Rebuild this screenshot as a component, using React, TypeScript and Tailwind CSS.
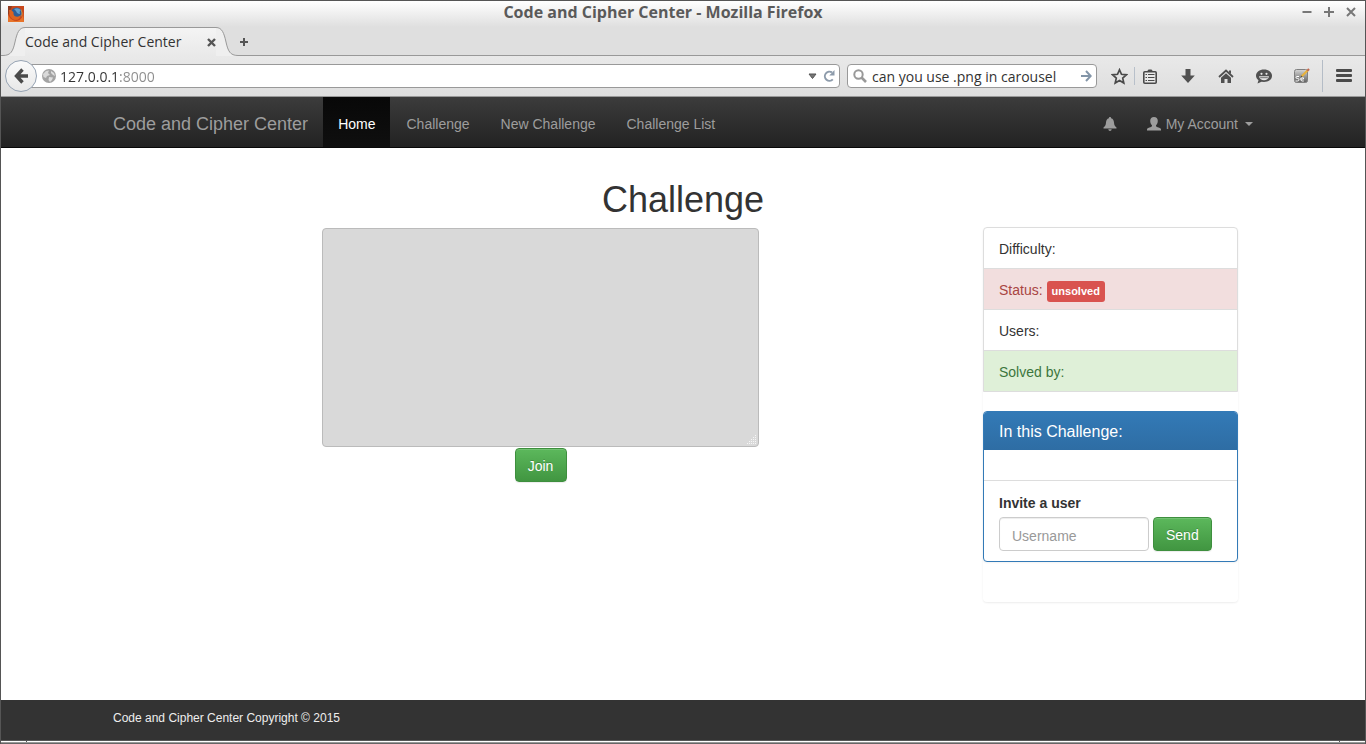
import type { ReactNode } from "react";

const chromeFont = "font-['Open_Sans','Noto_Sans',sans-serif]";

function ToolButton({ label, className, children }: { label: string; className: string; children: ReactNode }) {
  return (
    <button type="button" aria-label={label} className={`flex h-8 shrink-0 items-center justify-center ${className}`}>
      {children}
    </button>
  );
}

function FirefoxLogo() {
  return (
    <svg width="16" height="16" viewBox="0 0 16 16" aria-hidden="true">
      <rect width="16" height="16" fill="#c8481c" />
      <path d="M0 9 Q3 15 9 15 Q15 14 15 6 L16 16 H0Z" fill="#e8742a" />
      <path d="M0 0H4L2 6 0 9Z" fill="#8f3a1f" />
      <circle cx="8.5" cy="7" r="5.5" fill="#2f5f96" />
      <path d="M6 3 Q10 1 13 4 Q11 5 12 8 Q9 8 8 5Z" fill="#5fa0cf" />
      <path d="M1 4 Q3 3 4 5 Q5 5 5.500 6.500 Q5 8 6.500 10 Q10 12 13 9 Q12 14 7 14 Q1 13 1 4Z" fill="#dc6420" />
      <path d="M13 3 Q15.500 7 13.500 11 Q14 7 13 3Z" fill="#f2a43a" />
    </svg>
  );
}

function TitleBar() {
  return (
    <div className="flex h-[26px] items-center bg-linear-to-b from-white to-[#dfdfdf] pr-[9px] pl-[7px]">
      <FirefoxLogo />
      <h2 className="flex-1 pb-1 text-center text-base leading-5 font-bold text-[#5a5a5a]">
        Code and Cipher Center - Mozilla Firefox
      </h2>
      <div className="flex gap-3 pb-1">
        <button type="button" aria-label="Minimize">
          <svg width="10" height="10" viewBox="0 0 10 10" stroke="#777" strokeWidth="2"><path d="M0.500 5H9.500" /></svg>
        </button>
        <button type="button" aria-label="Maximize">
          <svg width="10" height="10" viewBox="0 0 10 10" stroke="#777" strokeWidth="2"><path d="M0 5H10M5 0V10" /></svg>
        </button>
        <button type="button" aria-label="Close window">
          <svg width="10" height="10" viewBox="0 0 10 10" stroke="#777" strokeWidth="2"><path d="M1 1L9 9M9 1L1 9" /></svg>
        </button>
      </div>
    </div>
  );
}

function TabStrip() {
  return (
    <div className="flex h-[29px] bg-[#dfdfdf]">
      <div className="w-[2px] border-b border-[#999]" />
      <svg width="22" height="29" viewBox="0 0 22 29" fill="none" aria-hidden="true">
        <path d="M0 29V28.500C8 28.500 10 24 12 15C14 6 16 0.500 22 0.500V29Z" fill="#efefef" />
        <path d="M0 28.500C8 28.500 10 24 12 15C14 6 16 0.500 22 0.500" stroke="#999" />
      </svg>
      <div className="flex w-[191px] items-center justify-between border-t border-[#999] bg-linear-to-b from-[#f4f4f4] to-[#e9e9e9]">
        <span className="text-sm text-[#333]">Code and Cipher Center</span>
        <button type="button" aria-label="Close tab">
          <svg width="9" height="9" viewBox="0 0 9 9" stroke="#555" strokeWidth="2.400"><path d="M1 1L8 8M8 1L1 8" /></svg>
        </button>
      </div>
      <svg width="22" height="29" viewBox="0 0 22 29" fill="none" aria-hidden="true">
        <path d="M22 29V28.500C14 28.500 12 24 10 15C8 6 6 0.500 0 0.500V29Z" fill="#efefef" />
        <path d="M22 28.500C14 28.500 12 24 10 15C8 6 6 0.500 0 0.500" stroke="#999" />
      </svg>
      <div className="flex flex-1 items-center border-b border-[#999] pt-[2px] pl-px">
        <button type="button" aria-label="New tab">
          <svg width="10" height="10" viewBox="0 0 10 10" stroke="#555" strokeWidth="2"><path d="M1 5H9M5 1V9" /></svg>
        </button>
      </div>
    </div>
  );
}

function Toolbar() {
  return (
    <div className="flex h-[41px] items-center border-b border-[#999] bg-linear-to-b from-[#e9e9e9] to-[#dedede] pl-1">
      <button
        type="button"
        aria-label="Back"
        className="z-10 flex size-8 shrink-0 items-center justify-center rounded-full border border-[#96a3b3] bg-linear-to-b from-[#fafafa] to-[#e8e8e8]"
      >
        <svg width="14" height="16" viewBox="0 0 14 16" fill="none" stroke="#4a4a4a" strokeWidth="3.400">
          <path d="M8.500 1.500L2.500 8L8.500 14.500M3 8H14" />
        </svg>
      </button>
      <div className="-ml-2 flex h-6 flex-1 items-center rounded-r-sm border border-[#999] bg-white pr-1 pl-3">
        <svg width="14" height="14" viewBox="0 0 14 14" className="shrink-0" aria-hidden="true">
          <circle cx="7" cy="7" r="7" fill="#a3a3a3" />
          <path d="M1 5L4 2L7 1.500L6 4L8 6L5 7L4 9L1.500 8Z" fill="#d9d9d9" />
          <path d="M9 2L12 4L13 7L11 6L9 4Z" fill="#dedede" />
          <path d="M7 8L11 8.500L10 11L8 13L6.500 11Z" fill="#dedede" />
        </svg>
        <input
          aria-label="Address"
          defaultValue="127.0.0.1:8000"
          className="ml-1 min-w-0 flex-1 bg-[linear-gradient(90deg,#333_59px,#8c8c8c_59px)] bg-clip-text pt-[2px] text-sm text-transparent outline-none"
        />
        <button type="button" aria-label="Show history" className="mr-1.5">
          <svg width="9" height="6" viewBox="0 0 9 6"><path d="M1 1H8L4.500 5.500Z" fill="#777" stroke="#555" /></svg>
        </button>
        <button type="button" aria-label="Reload">
          <svg width="12" height="12" viewBox="0 0 12 12" fill="none">
            <path d="M9.800 9.400A4.600 4.600 0 1 1 9 2.400" stroke="#8d9bab" strokeWidth="2" />
            <path d="M11.500 0V5.500H6.300Z" fill="#8d9bab" />
          </svg>
        </button>
      </div>
      <form className="ml-[7px] flex h-6 w-[250px] items-center rounded-sm border border-[#999] bg-white pr-1 pl-[5px]">
        <svg width="15" height="15" viewBox="0 0 15 15" fill="none" stroke="#999" aria-hidden="true">
          <circle cx="5.500" cy="5.500" r="4.200" strokeWidth="2" />
          <path d="M8.500 8.500L13 13" strokeWidth="2.600" />
        </svg>
        <input
          aria-label="Search the web"
          defaultValue="can you use .png in carousel"
          className="ml-1 min-w-0 flex-1 pt-[2px] text-sm text-[#333] outline-none"
        />
        <button type="button" aria-label="Search">
          <svg width="11" height="12" viewBox="0 0 11 12" fill="none" stroke="#8395a8" strokeWidth="2"><path d="M0 6H9M5 1L9.700 6L5 11" /></svg>
        </button>
      </form>
      <ToolButton label="Bookmark this page" className="ml-[7px] w-[30px]">
        <svg width="17" height="17" viewBox="0 0 17 17" fill="none" stroke="#4a4a4a" strokeWidth="1.700">
          <path d="M8.500 1.800L10.500 6.300L15.400 6.800L11.700 10.100L12.800 15L8.500 12.400L4.200 15L5.300 10.100L1.600 6.800L6.500 6.300Z" />
        </svg>
      </ToolButton>
      <div className="h-[18px] w-px bg-[#b8c0ca]" />
      <ToolButton label="Bookmarks" className="w-[34px] pr-1">
        <svg width="14" height="15" viewBox="0 0 14 15" fill="none">
          <rect x="0.800" y="2.800" width="12.400" height="11.400" rx="1" fill="#e9e9e9" stroke="#4a4a4a" strokeWidth="1.600" />
          <path d="M3.500 3L5.500 0.500H8.500L10.500 3Z" fill="#4a4a4a" />
          <path d="M2.500 5.500H4M2.500 8.500H4M2.500 11.500H4M5 5.500H11.500M5 8.500H11.500M5 11.500H11.500" stroke="#4a4a4a" />
        </svg>
      </ToolButton>
      <ToolButton label="Downloads" className="w-[38px]">
        <svg width="14" height="14" viewBox="0 0 14 14"><path d="M4.500 0H9.500V6.500H13.800L7 14L0.200 6.500H4.500Z" fill="#505050" /></svg>
      </ToolButton>
      <ToolButton label="Home" className="w-[38px]">
        <svg width="16" height="15" viewBox="0 0 16 15">
          <path d="M1 8L8 1.500L15 8" fill="none" stroke="#505050" strokeWidth="1.800" />
          <path d="M11 1.500H13V5L11 3.500ZM3 8.800L8 4.300L13 8.800V14H9.500V10H6.500V14H3Z" fill="#505050" />
        </svg>
      </ToolButton>
      <ToolButton label="Chat" className="w-[38px]">
        <svg width="16" height="15" viewBox="0 0 16 15">
          <path d="M8 0.500C12.500 0.500 16 3 16 6.800C16 10.600 12.500 13 8 13L5.500 12.800L1.500 14.500L2.500 11.300C1 10.200 0 8.700 0 6.800C0 3 3.500 0.500 8 0.500Z" fill="#505050" />
          <circle cx="5.500" cy="4.800" r="1.100" fill="#e4e4e4" />
          <circle cx="10.500" cy="4.800" r="1.100" fill="#e4e4e4" />
          <path d="M3 7.300H13C12.500 10 10.500 11.200 8 11.200C5.500 11.200 3.500 10 3 7.300Z" fill="#e4e4e4" />
          <path d="M4.200 8.700H11.800" stroke="#505050" strokeWidth="0.800" />
        </svg>
      </ToolButton>
      <ToolButton label="Selenium IDE" className="w-[38px]">
        <svg width="16" height="16" viewBox="0 0 16 16">
          <defs>
            <linearGradient id="ide" x1="0" y1="0" x2="0" y2="1">
              <stop offset="0" stopColor="#d6d6d6" />
              <stop offset="1" stopColor="#606060" />
            </linearGradient>
          </defs>
          <rect x="0.500" y="1.500" width="13" height="13" rx="2" fill="url(#ide)" stroke="#808080" />
          <path d="M5 8.500H3Q2 8.500 2 9.500Q2 10.500 3.500 10.500Q5 10.500 5 11.700Q5 13 3.500 13H1.500M6.800 11H9.600Q9.600 9.200 8.200 9.200Q6.800 9.200 6.800 11Q6.800 13 8.200 13H9.800" fill="none" stroke="#fff" />
          <path d="M7.500 8.500L13.500 2.500" stroke="#e8b23c" strokeWidth="2.200" />
          <path d="M13.300 2.700L15 1" stroke="#c4674b" strokeWidth="2.200" />
          <path d="M6.500 9.800L7.200 7.500L8.700 9Z" fill="#4a4a4a" />
        </svg>
      </ToolButton>
      <div className="ml-px h-8 w-px bg-[#b4bcc6]" />
      <ToolButton label="Open menu" className="w-[42px]">
        <svg width="16" height="14" viewBox="0 0 16 14" fill="#4a4a4a">
          <rect width="16" height="3" rx="1" />
          <rect y="5" width="16" height="3" rx="1" />
          <rect y="10" width="16" height="3" rx="1" />
        </svg>
      </ToolButton>
    </div>
  );
}

function Navbar() {
  const links = ["Challenge", "New Challenge", "Challenge List"];
  return (
    <header className="border-b border-[#080808] bg-linear-to-b from-[#3c3c3c] to-[#222]">
      <nav className="mx-auto flex h-[50px] max-w-[1170px] items-stretch text-sm text-[#9d9d9d]">
        <a href="#" className="flex items-center px-[15px] pt-[3px] text-lg">Code and Cipher Center</a>
        <div className="flex gap-px">
          <a href="#" aria-current="page" className="flex items-center bg-linear-to-b from-[#080808] to-[#0f0f0f] px-[15px] pt-[3px] text-white">Home</a>
          {links.map((link) => (
            <a key={link} href="#" className="flex items-center px-[15px] pt-[3px]">{link}</a>
          ))}
        </div>
        <a href="#" aria-label="Notifications" className="ml-auto flex items-center px-[15px] pt-[3px]">
          <svg width="14" height="14" viewBox="0 0 14 14" fill="currentColor">
            <path d="M7 0C7.700 0 8.100 0.500 8.100 1.200C10 1.700 10.800 3.200 11 5.500C11.200 8 11.800 9 13.500 10.500V11.500H0.500V10.500C2.200 9 2.800 8 3 5.500C3.200 3.200 4 1.700 5.900 1.200C5.900 0.500 6.300 0 7 0ZM5.300 12.200H8.700C8.500 13.300 7.900 13.900 7 13.900C6.100 13.900 5.500 13.300 5.300 12.200Z" />
          </svg>
        </a>
        <a href="#" className="flex items-center px-[15px] pt-[3px]">
          <svg width="14" height="14" viewBox="0 0 14 14" fill="currentColor" className="mr-[5px]" aria-hidden="true">
            <path d="M7 0C9.400 0 10.800 1.500 10.800 3.800C10.800 5.800 10 7.400 9 8.200C9 9.400 9.300 9.700 10.800 10.200C13 10.900 14 11.500 14 12.500V13.500H0V12.500C0 11.500 1 10.900 3.200 10.200C4.700 9.700 5 9.400 5 8.200C4 7.400 3.200 5.800 3.200 3.800C3.200 1.500 4.600 0 7 0Z" />
          </svg>
          My Account
          <svg width="8" height="4" viewBox="0 0 8 4" fill="currentColor" className="mt-px ml-[7px]" aria-hidden="true"><path d="M0 0H8L4 4Z" /></svg>
        </a>
      </nav>
    </header>
  );
}

const greenButton =
  "h-[34px] min-w-[52px] rounded border border-[#3e8f3e] bg-linear-to-b from-[#5cb85c] to-[#419641] px-3 pt-[2px] text-sm text-white shadow-[inset_0_1px_0_rgba(255,255,255,0.15),0_1px_1px_rgba(0,0,0,0.075)] [text-shadow:0_-1px_0_rgba(0,0,0,0.2)]";

function ResizeGrip() {
  const dots: { x: number; y: number }[] = [];
  for (let row = 0; row < 5; row++) {
    for (let col = 4 - row; col < 5; col++) dots.push({ x: col * 2, y: row * 2 });
  }
  return (
    <svg width="10" height="10" viewBox="0 0 10 10" className="pointer-events-none absolute right-[2px] bottom-[2px]" aria-hidden="true">
      {dots.map((dot) => (
        <rect key={`${dot.x}-${dot.y}`} x={dot.x} y={dot.y} width="1" height="1" fill="#f6f6f6" />
      ))}
    </svg>
  );
}

function Sidebar() {
  return (
    <aside className="mr-[30px] w-[255px] rounded pb-10 text-sm text-[#333] shadow-[0_1px_2px_rgba(0,0,0,0.075)]">
      <ul className="divide-y divide-[#ddd] rounded-t border border-[#ddd] leading-5">
        <li className="px-[15px] pt-[11px] pb-[9px]">Difficulty:</li>
        <li className="flex h-[41px] items-center gap-1 bg-[#f2dede] px-[15px] pt-[5px] text-[#a94442]">
          <span className="-mt-1">Status:</span>
          <span className="rounded-[3px] bg-[#d9534f] px-[5px] text-[11px] leading-[21px] font-bold text-white">unsolved</span>
        </li>
        <li className="px-[15px] pt-[11px] pb-[9px]">Users:</li>
        <li className="bg-[#dff0d8] px-[15px] pt-[11px] pb-[9px] text-[#3c763d]">Solved by:</li>
      </ul>
      <section className="mt-[19px] overflow-hidden rounded border border-[#337ab7] bg-white shadow-[0_1px_2px_rgba(0,0,0,0.05)]">
        <h2 className="bg-linear-to-b from-[#337ab7] to-[#2e6da4] px-[15px] pt-[11px] pb-[9px] text-base leading-[18px] text-white">In this Challenge:</h2>
        <div className="h-[30px]" />
        <form className="border-t border-[#ddd] px-[15px] pt-3 pb-[10px]">
          <label htmlFor="username" className="mb-1 block leading-5 font-bold">Invite a user</label>
          <div className="flex gap-1">
            <input
              id="username"
              type="text"
              placeholder="Username"
              className="h-[34px] w-[150px] rounded border border-[#ccc] px-3 pt-1 text-sm shadow-[inset_0_1px_1px_rgba(0,0,0,0.075)] placeholder:text-[#999]"
            />
            <button type="button" className={greenButton}>Send</button>
          </div>
        </form>
      </section>
    </aside>
  );
}

export default function App() {
  return (
    <div className="flex min-h-screen flex-col border-x border-t border-[#555] bg-white font-['Liberation_Sans',Arial,sans-serif]">
      <div className={chromeFont}>
        <TitleBar />
        <TabStrip />
        <Toolbar />
      </div>
      <Navbar />
      <main className="flex-1 pt-8">
        <h1 className="mb-[7px] text-center text-4xl leading-10 text-[#333]">Challenge</h1>
        <div className="mx-auto flex max-w-[1170px] items-start">
          <div className="flex flex-1 flex-col items-center gap-px pt-px">
            <div className="relative flex">
              <textarea
                aria-label="Challenge text"
                readOnly
                className="h-[219px] w-[437px] resize-none rounded border border-[#bbb] bg-[#d9d9d9] outline-none"
              />
              <ResizeGrip />
            </div>
            <button type="button" className={greenButton}>Join</button>
          </div>
          <Sidebar />
        </div>
      </main>
      <footer className="bg-[#333] text-xs text-[#eee]">
        <p className="mx-auto h-10 max-w-[1170px] px-[15px] pt-[10px] leading-4">Code and Cipher Center Copyright © 2015</p>
      </footer>
      <div className="flex h-1 flex-col">
        <div className="h-px bg-[#555]" />
        <div className="flex h-px bg-white">
          <div className="w-[25px]" />
          <div className="w-px bg-[#555]" />
          <div className="flex-1" />
          <div className="w-px bg-[#555]" />
          <div className="w-[25px]" />
        </div>
        <div className="h-px bg-[#999]" />
        <div className="h-px bg-[#666]" />
      </div>
    </div>
  );
}
